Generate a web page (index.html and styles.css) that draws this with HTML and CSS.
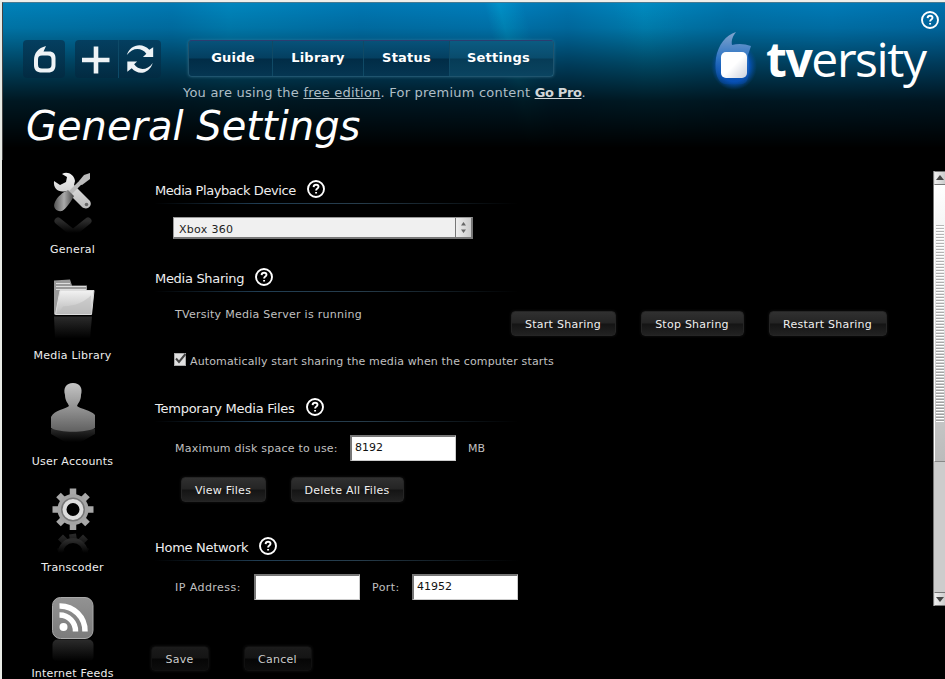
FILE: index.html
```html
<!DOCTYPE html>
<html lang="en">
<head>
<meta charset="utf-8">
<title>General Settings</title>
<link rel="stylesheet" href="styles.css">
</head>
<body>
<svg class="defs" width="0" height="0">
  <defs>
    <linearGradient id="metal" x1="0" y1="0" x2="0" y2="1"><stop offset="0" stop-color="#f2f2f2"/><stop offset="1" stop-color="#b9b9b9"/></linearGradient>
    <linearGradient id="dark" x1="0" y1="0" x2="1" y2="0"><stop offset="0" stop-color="#555"/><stop offset=".5" stop-color="#aaa"/><stop offset="1" stop-color="#444"/></linearGradient>
    <linearGradient id="person" x1="0" y1="0" x2="0" y2="1"><stop offset="0" stop-color="#c4c4c4"/><stop offset=".6" stop-color="#8a8a8a"/><stop offset="1" stop-color="#606060"/></linearGradient>
    <linearGradient id="fade" x1="0" y1="0" x2="0" y2="1"><stop offset="0" stop-color="#2b2b2b"/><stop offset="1" stop-color="#000"/></linearGradient>
    <linearGradient id="feed" x1="0" y1="0" x2="0" y2="1"><stop offset="0" stop-color="#929292"/><stop offset="1" stop-color="#7b7b7b"/></linearGradient>
    <symbol id="help" viewBox="0 0 18 18"><circle cx="9" cy="9" r="8" fill="none" stroke="#fff" stroke-width="1.9"/><path d="M6.6 7.1C6.7 5.5 7.6 4.8 9.1 4.8S11.5 5.6 11.5 6.8C11.5 8.5 9.1 8.4 9.1 10.4M9.1 11.9V13.6" fill="none" stroke="#fff" stroke-width="1.9"/></symbol>
  </defs>
</svg>
<div class="page">
  <header class="header">
    <div class="topbar"><svg class="help"><use href="#help"/></svg></div>
    <div class="toolbar">
      <div class="tools home">
        <svg width="42" height="38" viewBox="0 0 42 38"><path d="M11 20C11 13 15 8 23 6L20.500 11.500H26C30.500 11.500 32.500 14 32.500 18V25C32.500 30 30 32.500 25 32.500H19C13.500 32.500 11 30 11 25ZM19 15.500C16 15.500 15 17 15 19.500V24.500C15 27.500 16.500 28.500 19 28.500H24.500C27.500 28.500 28.500 27 28.500 24.500V19.500C28.500 17 27.500 15.500 24.500 15.500Z" fill="#eef3f6"/></svg>
      </div>
      <div class="tools pair">
        <svg width="43" height="38" viewBox="0 0 43 38"><path d="M21 6.500V33.500M7 20H34.500" stroke="#eef3f6" stroke-width="4.600"/></svg>
        <svg class="refresh" width="43" height="38" viewBox="0 0 43 38"><path d="M8 15C11 4 24 1.500 31 9.500L35 7V17H24.500L28 13.500C23 7 14 7 8 15ZM34.500 23C31.500 33.500 20 36.500 13 28.500L8.500 32V21.500H18.500L15.500 24.500C20 31 29 31 34.500 23Z" fill="#eef3f6"/></svg>
      </div>
      <nav class="nav"><a class="guide">Guide</a><a class="library">Library</a><a class="status">Status</a><a class="settings">Settings</a></nav>
      <div class="brand">
        <svg width="50" height="62" viewBox="0 0 50 62">
          <defs><radialGradient id="glow"><stop offset=".65" stop-color="#0754be"/><stop offset="1" stop-color="#064c9d" stop-opacity="0"/></radialGradient><linearGradient id="tail" x1="0" y1="0" x2="0" y2="1"><stop offset="0" stop-color="#83a5cd"/><stop offset=".5" stop-color="#2d74c4"/><stop offset="1" stop-color="#0447a8" stop-opacity=".4"/></linearGradient><linearGradient id="tile" x1="0" y1="0" x2="1" y2="1"><stop offset=".5" stop-color="#fff"/><stop offset="1" stop-color="#cbd0dc"/></linearGradient></defs>
          <rect x="0" y="13" width="46" height="48" rx="18" fill="url(#glow)"/>
          <path d="M25 3C15 6 7 16 5 29C3 44 7 54 14 55H31C37 54 39 48 37 26L40 17C34 15 28 14 21 16C20 11 22 7 25 3Z" fill="url(#tail)"/>
          <rect x="10" y="23" width="26" height="26" rx="5" fill="url(#tile)"/>
        </svg>
        <div class="wordmark"><b>tv</b>ersity</div>
      </div>
    </div>
    <p class="note">You are using the <u>free edition</u>. For premium content <b><u>Go Pro</u></b>.</p>
    <h1>General Settings</h1>
  </header>
  <main class="main">
    <aside class="sidebar">
      <div class="item"><svg viewBox="2 -1 64 76">
        <path d="M19 52L34 64L49 52" stroke="url(#fade)" stroke-width="7" fill="none" stroke-linecap="round"/>
        <path d="M23 5C28 2 35 5 36 12L35 16L51 32C54 37 48 42 43 38L27 22C20 24 14 20 15 12L21 16L27 13L28 8Z" fill="url(#metal)"/><circle cx="47.500" cy="35.500" r="1.800" fill="#666"/>
        <path d="M31 24L41 14" stroke="#bbb" stroke-width="4"/><path d="M40 12L45 6L51 4L51 10L43 16L39 15Z" fill="#bbb"/><path d="M29 21L35 27C33 31 27 40 23 42C18 43 13 39 16 33C18 28 24 23 29 21Z" fill="url(#dark)"/></svg><span>General</span></div>
      <div class="item"><svg viewBox="1 5.500 64 76">
        <path d="M14 48H52L50 70H15Z" fill="url(#fade)"/><path d="M14 46V12L30 11L32 17H47V24H50V46Z" fill="#999"/><path d="M16 15H30M16 18H46M16 21H46" stroke="#ddd"/><path d="M20 22H54L51.500 46H15.500Z" fill="url(#metal)" stroke="#ddd"/><path d="M23 38C37 37 43 34 51 27L50 45H18Z" fill="#bbb" opacity=".55"/></svg><span>Media Library</span></div>
      <div class="item"><svg viewBox="0 4 64 76">
        <path d="M10 53H54V58L40 66H24L10 58Z" fill="url(#fade)"/><path d="M32 7C39 7 42 12 40 19C40 25 37 27 36 30C39 33 50 34 54 39V52C45 57 19 57 10 52V41C13 34 25 33 28 30C27 27 24 25 24 19C22 12 25 7 32 7Z" fill="url(#person)"/></svg><span>User Accounts</span></div>
      <div class="item"><svg viewBox=".5 6 64 76">
        <g stroke="url(#fade)" stroke-width="7"><path d="M32 54L33 60M20 57L25 62M45 57L40 62M18 72L23 69M47 72L42 69"/><path d="M20 73A12 12 0 0 1 45 73" fill="none" stroke-width="5"/></g>
        <g stroke="#a8a8a8" stroke-width="6.500"><path d="M32.500 8.500V50M12 29.500H53M18 15L47 44M47 15L18 44"/></g><circle cx="32.500" cy="29.500" r="15.500" fill="#a4a4a4"/><circle cx="32.500" cy="29.500" r="9" fill="#000" stroke="#777" stroke-width="6"/><circle cx="32.500" cy="29.500" r="8.500" fill="#000" stroke="#ddd" stroke-width="4"/></svg><span>Transcoder</span></div>
      <div class="item"><svg viewBox=".5 5.500 64 76">
        <rect x="12" y="53" width="41" height="22" rx="5" fill="url(#fade)"/><rect x="12" y="11" width="40.500" height="41" rx="8" fill="url(#feed)" stroke="#aaa"/><circle cx="23" cy="40.500" r="4" fill="#fff"/><path d="M19 28.500A16 16 0 0 1 35 45M19 19.500A25 25 0 0 1 44.500 45" fill="none" stroke="#fff" stroke-width="5.500"/></svg><span>Internet Feeds</span></div>
    </aside>
    <section class="content">
      <div class="section playback">
        <h2><span class="t1">Media Playback Device</span><svg class="help"><use href="#help"/></svg></h2>
        <div class="select"><span>Xbox 360</span><i><svg width="15" height="19"><path d="M5 7.500L7.500 4L10 7.500ZM5 11.500L7.500 15L10 11.500Z" fill="#666"/></svg></i></div>
      </div>
      <div class="section sharing">
        <h2><span class="t2">Media Sharing</span><svg class="help"><use href="#help"/></svg></h2>
        <div class="server"><span class="state">TVersity Media Server is running</span><button class="b-start">Start Sharing</button><button class="b-stop">Stop Sharing</button><button class="b-restart">Restart Sharing</button></div>
        <label class="check"><svg width="14" height="14"><rect x="1.500" y=".5" width="11" height="12" fill="#e1e1e1" stroke="#aaa"/><path d="M3 5.500L6 9L12.500 1" fill="none" stroke="#444" stroke-width="2"/></svg><span>Automatically start sharing the media when the computer starts</span></label>
      </div>
      <div class="section temporary">
        <h2><span class="t3">Temporary Media Files</span><svg class="help"><use href="#help"/></svg></h2>
        <div class="fields"><span class="l-disk">Maximum disk space to use:</span><div class="input">8192</div><span class="unit">MB</span></div>
        <div class="actions"><button class="b-view">View Files</button><button class="b-delete">Delete All Files</button></div>
      </div>
      <div class="section network">
        <h2><span class="t4">Home Network</span><svg class="help"><use href="#help"/></svg></h2>
        <div class="fields"><span class="l-ip">IP Address:</span><div class="input"></div><span class="l-port">Port:</span><div class="input">41952</div></div>
      </div>
      <div class="footer"><button class="b-save">Save</button><button class="b-cancel">Cancel</button></div>
    </section>
    <div class="scrollbar">
      <div class="arrow"><svg width="10" height="12"><path d="M1 8L5 3L9 8Z" fill="#444"/></svg></div>
      <div class="thumb"><div class="grip"></div></div>
      <div class="track"></div>
      <div class="arrow"><svg width="10" height="12"><path d="M1 4L5 9L9 4Z" fill="#444"/></svg></div>
    </div>
  </main>
</div>
</body>
</html>
```
FILE: styles.css
```css
* { box-sizing: border-box; }
body { margin: 0; height: 679px; overflow: hidden; background: #000; font-family: "DejaVu Sans", Verdana, sans-serif; font-size: 11px; color: #c0c0c0; }
.defs { position: absolute; }
.page { height: 679px; overflow: hidden; border-left: 2px solid #e8ebe6; border-top: 2px solid #eeeeea; background: #000; }
.header { height: 158px; border-top: 1px solid #487a91; border-left: 1px solid #444;
  background:
    linear-gradient(180deg, rgba(0,0,0,0) 0, rgba(0,0,0,.12) 25px, rgba(0,0,0,.48) 60px, rgba(0,0,0,.82) 98px, #000 145px),
    linear-gradient(76deg, transparent 0 53%, rgba(0,174,220,.4) 54.5%, transparent 57% 66%, rgba(0,165,210,.12) 69%, transparent 73%),
    linear-gradient(90deg, #0082ba, #0078b2 18%, #0086be 24%, #0078b4 38%, #007ebc 54%, #0075b0 60%, #0088bf 68%, #0077b0 77%, #007bb8 88%, #0070ad); }
.help { width: 18px; height: 18px; flex: none; display: block; }
.topbar { height: 37px; display: flex; justify-content: flex-end; padding: 8px 6px 0 0; }
.toolbar { height: 38px; display: flex; padding-left: 20px; }
.tools { height: 38px; border-radius: 4px; background: linear-gradient(#043f60, #022b42); display: flex; flex: none; }
.tools svg { display: block; }
.home { width: 42px; margin-right: 10px; }
.pair { width: 86px; margin-right: 27px; }
.refresh { border-left: 1px solid #0d4a68; }
.nav { width: 366px; height: 37px; flex: none; display: flex; border-radius: 4px; border: 1px solid #1f546e; border-top-color: #2c3c70; background: linear-gradient(#07527a, #043f60 49%, #012c46 51%, #053652); box-shadow: 0 0 3px rgba(100,160,185,.4); color: #fff; font-weight: bold; font-size: 13px; line-height: 34px; text-align: center; letter-spacing: .2px; }
.nav a { border-right: 1px solid #104a66; }
.guide { width: 84px; padding-left: 5px; }
.library { width: 91px; }
.status { width: 86px; }
.nav .settings { flex: 1; border: 0; background: rgba(40,140,175,.16); padding-right: 6px; letter-spacing: .2px; }
.brand { display: flex; margin: -11px 0 0 157px; height: 62px; flex: none; }
.wordmark { font-family: "Open Sans", sans-serif; font-size: 48px; line-height: 60px; color: #fff; letter-spacing: -1.4px; margin-left: 5px; white-space: nowrap; }
.note { margin: 7px 0 0 180px; line-height: 16px; font-size: 13px; letter-spacing: .22px; color: #afbec6; white-space: nowrap; }
.note b { color: #d2d6d8; letter-spacing: -.35px; }
h1 { margin: 2px 0 0 23px; color: #fff; font-size: 40px; line-height: 47px; font-weight: normal; font-style: italic; white-space: nowrap; }
.main { display: flex; height: 519px; }
.sidebar { width: 141px; flex: none; padding-top: 8px; }
.item { height: 106px; display: flex; flex-direction: column; align-items: center; color: #eee; letter-spacing: .22px; }
.item svg { width: 64px; height: 76px; display: block; flex: none; }
.item span { line-height: 14px; margin-top: -1px; white-space: nowrap; }
.content { width: 760px; flex: none; padding-left: 12px; padding-top: 20px; }
.section h2 { margin: 0; width: 370px; height: 24px; display: flex; align-items: flex-start; font-size: 13px; line-height: 22px; font-weight: normal; letter-spacing: -.3px; color: #eee; white-space: nowrap; border-bottom: 1px solid; border-image: linear-gradient(90deg, #000, #203d53 28%, #263c4b 55%, #000 98%) 1; }
h2 span { flex: none; }
h2 .t1 { width: 152px; letter-spacing: -.43px; }
.t2 { width: 100px; }
h2 .t3 { width: 151px; letter-spacing: -.25px; }
.t4 { width: 104px; }
.playback { height: 88px; }
.sharing { height: 130px; }
.temporary { height: 139px; }
.network { height: 107px; }
.select { width: 300px; height: 22px; margin: 13px 0 0 18px; display: flex; justify-content: space-between; background: #f0f0f0; border: 1px solid #999; border-right: 2px solid #777; border-bottom: 2px solid #777; color: #222; line-height: 23px; padding-left: 5px; letter-spacing: .3px; }
.select i { width: 16px; border-left: 1px solid #777; background: linear-gradient(90deg, #eee, #ccc); }
.select svg { display: block; }
button { height: 25px; padding: 1px 1px 0 0; border: 1px solid #252525; border-radius: 4px; background: linear-gradient(#303030, #242424 49%, #141414 51%, #222); color: #f0f0f0; font: 11px/23px "DejaVu Sans", Verdana, sans-serif; letter-spacing: .25px; white-space: nowrap; flex: none; box-shadow: 0 0 3px #161616; }
.server { display: flex; margin: 15px 0 0 20px; height: 45px; line-height: 16px; }
.server button { margin-top: 4px; }
.state { width: 336px; flex: none; white-space: nowrap; letter-spacing: .26px; }
.b-start { width: 105px; margin-right: 25px; }
.b-stop { width: 103px; margin-right: 25px; }
.b-restart { width: 118px; }
.check { display: flex; height: 14px; line-height: 17px; margin: 1px 0 0 18px; gap: 3px; white-space: nowrap; letter-spacing: .145px; }
.check svg { flex: none; }
.fields { display: flex; height: 26px; line-height: 28px; margin: 13px 0 0 20px; white-space: nowrap; }
.fields span { flex: none; }
.l-disk { width: 175px; letter-spacing: .23px; }
.unit { margin-left: 12px; }
.l-ip { width: 79px; letter-spacing: .45px; }
.l-port { width: 40px; margin-left: 12px; letter-spacing: .4px; }
.input { width: 106px; height: 26px; background: #fff; border: 1px solid #ccc; border-top: 2px solid #777; border-left: 2px solid #777; color: #111; line-height: 21px; padding-left: 3px; flex: none; }
.actions { display: flex; margin: 16px 0 0 26px; gap: 25px; }
.b-view { width: 85px; }
.b-delete { width: 113px; }
.footer { display: flex; margin: 2px 0 0 -4px; gap: 35px; }
.footer button { color: #ccc; border-color: #101010; background: linear-gradient(#1b1b1b, #141414 49%, #060606 51%, #0c0c0c); }
.b-save { width: 58px; }
.b-cancel { width: 68px; }
.scrollbar { width: 12px; height: 435px; flex: none; margin: 11px 0 0 30px; border-left: 1px solid #777; background: #ccc; }
.arrow { height: 14px; background: linear-gradient(90deg, #eee, #ccc); border: 1px solid #777; border-left-color: #ddd; border-right: 0; }
.arrow svg { display: block; }
.thumb { height: 277px; padding: 40px 1px 0; background: linear-gradient(#fff, #bbb); border-left: 1px solid #fff; border-bottom: 1px solid #888; }
.grip { height: 198px; background: repeating-linear-gradient(rgba(120,120,120,.5) 0 1px, #fff 1px 2px, transparent 2px 3px); }
.track { height: 130px; }
```
